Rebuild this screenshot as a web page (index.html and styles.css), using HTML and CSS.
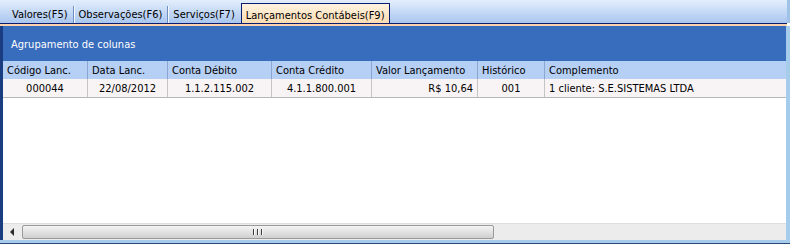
FILE: index.html
```html
<!DOCTYPE html>
<html lang="pt-BR">
<head>
<meta charset="utf-8">
<title>Lançamentos Contábeis</title>
<link rel="stylesheet" href="styles.css">
</head>
<body>
<div class="window">
  <div class="tabstrip">
    <div class="tab">Valores(F5)</div>
    <div class="sep"></div>
    <div class="tab">Observações(F6)</div>
    <div class="sep"></div>
    <div class="tab">Serviços(F7)</div>
    <div class="tab active">Lançamentos Contábeis(F9)</div>
  </div>
  <div class="tabline"></div>
  <div class="content">
    <div class="group">Agrupamento de colunas</div>
    <div class="grid head">
      <div class="cell">Código Lanc.</div>
      <div class="cell">Data Lanc.</div>
      <div class="cell">Conta Débito</div>
      <div class="cell">Conta Crédito</div>
      <div class="cell">Valor Lançamento</div>
      <div class="cell">Histórico</div>
      <div class="cell">Complemento</div>
    </div>
    <div class="grid row">
      <div class="cell c">000044</div>
      <div class="cell c">22/08/2012</div>
      <div class="cell c">1.1.2.115.002</div>
      <div class="cell c">4.1.1.800.001</div>
      <div class="cell r">R$ 10,64</div>
      <div class="cell c">001</div>
      <div class="cell">1 cliente: S.E.SISTEMAS LTDA</div>
    </div>
    <div class="empty"></div>
    <div class="hscroll">
      <div class="arrow"><svg width="5" height="8" viewBox="0 0 5 8"><path d="M4 0 L0 4 L4 8 Z" fill="#2b2b2b"/></svg></div>
      <div class="thumb"><span class="grip"></span><span class="grip"></span><span class="grip"></span></div>
      <div class="track"></div>
    </div>
  </div>
  <div class="bottom"></div>
</div>
</body>
</html>
```
FILE: styles.css
```css
html, body {
  margin: 0;
  padding: 0;
  background: #ffffff;
}
body {
  width: 790px;
  height: 244px;
  overflow: hidden;
  font-family: "DejaVu Sans Condensed", "DejaVu Sans", sans-serif;
  font-size: 11px;
  color: #000;
}
.window {
  width: 790px;
  height: 244px;
  display: flex;
  flex-direction: column;
  box-sizing: border-box;
}
.tabstrip {
  height: 23px;
  display: flex;
  align-items: flex-end;
  padding-left: 8px;
  background: linear-gradient(#e3eefc, #c6daf6 50%, #a9c6ef);
  border-right: 3px solid #9ec2e8;
  box-sizing: border-box;
}
.tab {
  height: 19px;
  box-sizing: border-box;
  padding: 4px 5px 0 4px;
  line-height: 14px;
  white-space: nowrap;
}
.sep {
  width: 1px;
  height: 17px;
  background: #6d8fc0;
  border-right: 1px solid #f4f8fe;
}
.tab.active {
  margin-left: 1px;
  height: 20px;
  padding: 4px 4px 0 4px;
  line-height: 15px;
  background: linear-gradient(#fff3e0, #fcdcb2);
  border: 1px solid #0b1d6e;
  border-bottom: none;
}
.tabline {
  height: 1px;
  background: #0b1d6e;
  border-bottom: 2px solid #fbd4ad;
  margin-right: 3px;
}
.content {
  flex: 1;
  display: flex;
  flex-direction: column;
  border-left: 3px solid #1a3d82;
  border-right: 4px solid #a6ccec;
}
.group {
  height: 35px;
  background: #386cbc;
  color: #ffffff;
  box-sizing: border-box;
  padding: 12px 0 0 8px;
  line-height: 14px;
}
.grid {
  display: grid;
  grid-template-columns: 84px 80px 104px 100px 106px 67px 1fr;
  height: 18px;
}
.head {
  background: #b6cff5;
}
.head .cell {
  border-left: 1px solid #8aa6d2;
  padding: 3px 0 0 4px;
  line-height: 14px;
}
.head .cell:first-child {
  border-left: none;
}
.row {
  background: #f8f4f6;
  border-bottom: 1px solid #b7b7b7;
}
.row .cell {
  border-left: 1px solid #c4c4c4;
  line-height: 14px;
  padding: 3px 4px 0;
}
.row .cell:first-child {
  border-left: none;
}
.cell {
  box-sizing: border-box;
  overflow: hidden;
  white-space: nowrap;
}
.c { text-align: center; }
.r { text-align: right; }
.empty {
  flex: 1;
  background: #ffffff;
}
.hscroll {
  height: 16px;
  display: flex;
  align-items: stretch;
  background: #ececec;
  border-top: 1px solid #dedede;
}
.arrow {
  width: 19px;
  display: flex;
  align-items: center;
  justify-content: center;
}
.thumb {
  width: 472px;
  margin: 1px 0;
  border: 1px solid #9a9a9a;
  border-radius: 2px;
  background: linear-gradient(#f4f4f4, #e2e2e2 50%, #cfcfcf);
  box-sizing: border-box;
  display: flex;
  justify-content: center;
  align-items: center;
  gap: 2px;
}
.grip {
  width: 1px;
  height: 6px;
  background: #3b3b3b;
  border-right: 1px solid #fafafa;
}
.track {
  flex: 1;
}
.bottom {
  height: 4px;
  background: #a6ccec;
  border-bottom: 1px solid #2a4a7a;
  box-sizing: border-box;
}
```
